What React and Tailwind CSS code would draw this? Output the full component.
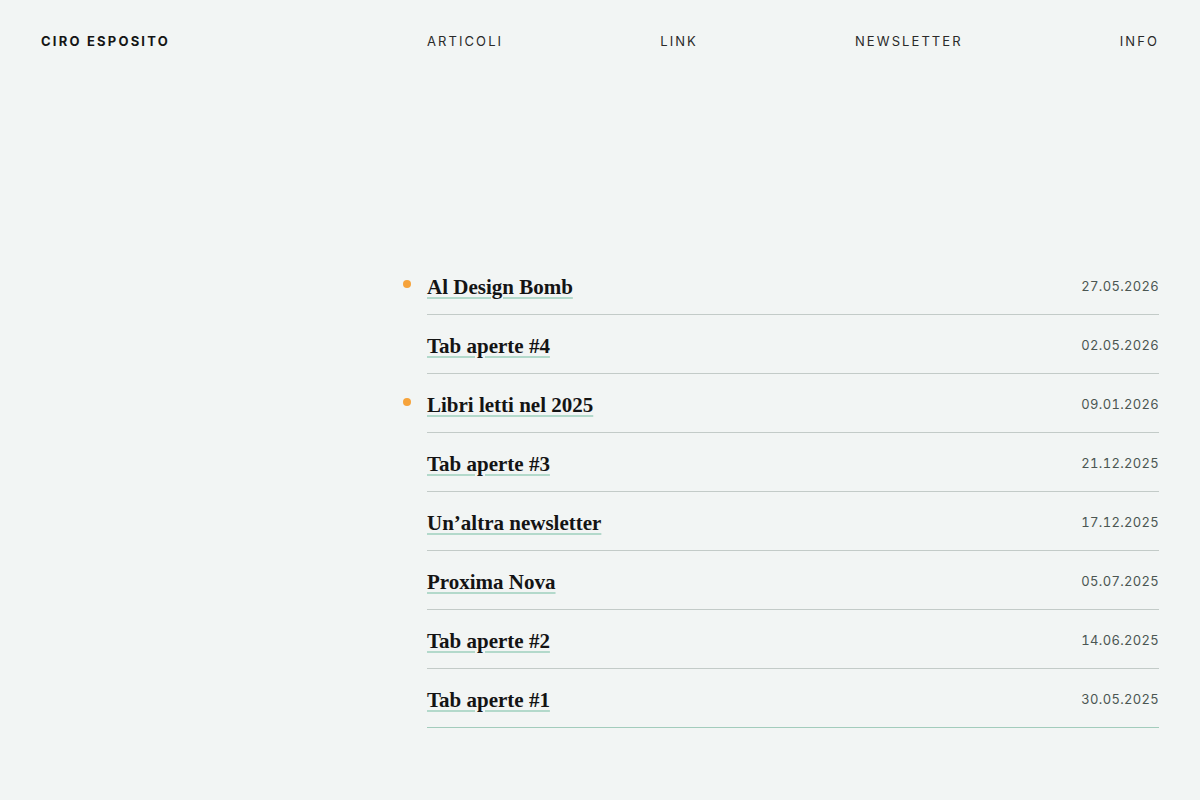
export default function App() {
  const posts = [
    { t: "Al Design Bomb", d: "27.05.2026", dot: true },
    { t: "Tab aperte #4", d: "02.05.2026" },
    { t: "Libri letti nel 2025", d: "09.01.2026", dot: true },
    { t: "Tab aperte #3", d: "21.12.2025" },
    { t: "Un’altra newsletter", d: "17.12.2025" },
    { t: "Proxima Nova", d: "05.07.2025" },
    { t: "Tab aperte #2", d: "14.06.2025" },
    { t: "Tab aperte #1", d: "30.05.2025" },
  ];
  const sans = { fontFamily: "Inter, 'Liberation Sans', sans-serif" };
  return (
    <div className="min-h-[800px] w-full bg-[#f2f5f4] px-[41px]" style={sans}>
      <header className="flex h-[84px] items-center">
        <div className="w-[386px] text-[13px] font-bold tracking-[0.17em] text-[#151515]">CIRO ESPOSITO</div>
        <nav className="flex flex-1 justify-between text-[13px] tracking-[0.16em] text-[#2a2a2a]">
          <a>ARTICOLI</a>
          <a>LINK</a>
          <a>NEWSLETTER</a>
          <a>INFO</a>
        </nav>
      </header>
      <main className="flex pt-[172px]">
        <div className="w-[386px]" />
        <div className="flex-1">
          <ul>
            {posts.map((p, i) => (
              <li
                key={i}
                className={
                  i === posts.length - 1
                    ? "relative flex h-[58px] items-center justify-between"
                    : "relative flex h-[59px] items-center justify-between border-b border-[#c3cbc8]"
                }
              >
                {p.dot && <span className="absolute left-[-24px] top-[24px] h-[8px] w-[8px] rounded-full bg-[#f6a33b]" />}
                <a
                  className="mt-[6px] text-[21px] font-bold text-[#141414] underline decoration-[#b3d9cb] decoration-2 underline-offset-[3px]"
                  style={{ fontFamily: "'Liberation Serif', serif" }}
                >
                  {p.t}
                </a>
                <span className="mt-[4px] text-[13px] tabular-nums tracking-[0.025em] text-[#4b5652]">{p.d}</span>
              </li>
            ))}
          </ul>
          <div className="h-px bg-[#a3ccbc]" />
        </div>
      </main>
    </div>
  );
}
